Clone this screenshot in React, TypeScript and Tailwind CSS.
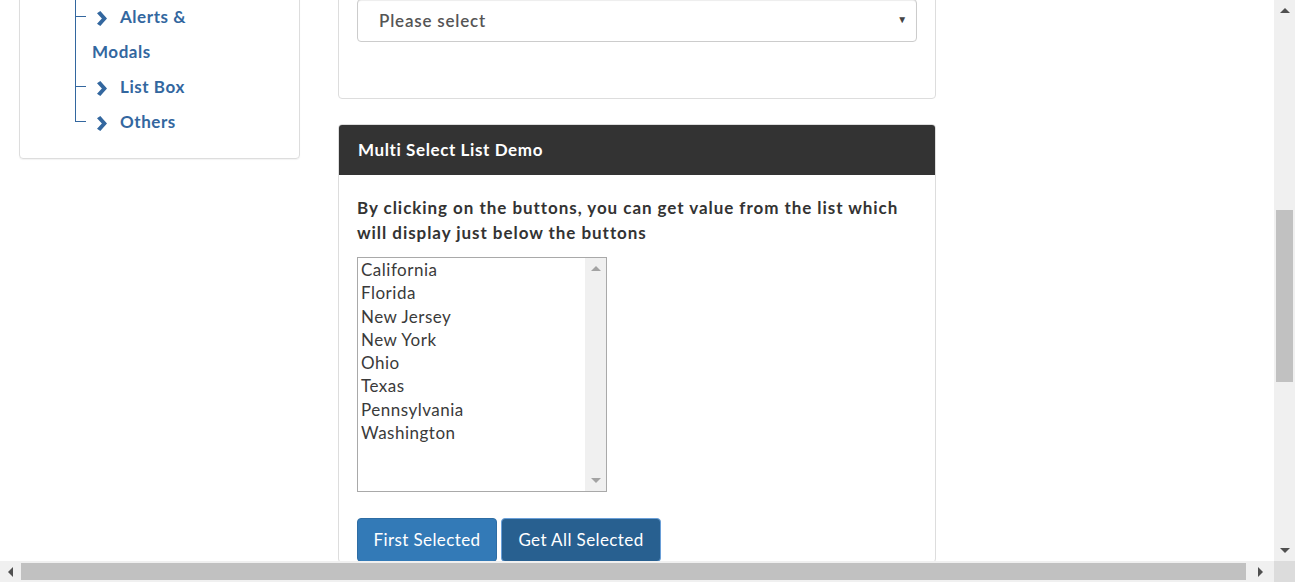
import React from "react";

const font = { fontFamily: "Lato, 'Noto Sans', sans-serif" };

function Chevron() {
  return (
    <svg width="12" height="15" viewBox="0 0 12 15" className="inline-block">
      <path d="M1 2.2 L4.3 0 L11 7.5 L4.3 15 L1 12.8 L5.9 7.5 Z" fill="#33679f" />
    </svg>
  );
}

function TreeItem({ children, tick }: { children: React.ReactNode; tick?: boolean }) {
  return (
    <div className="relative pl-[17px] leading-[35px]">
      {tick && <div className="absolute left-0 top-[17px] w-[11px] h-[1px] bg-[#33679f]" />}
      <span className="inline-block w-[28px] pl-[4px]"><Chevron /></span>
      {children}
    </div>
  );
}

function ScrollArrow({ dir }: { dir: "up" | "down" | "left" | "right" }) {
  const pts = {
    up: "0,6 5,1 10,6",
    down: "0,1 5,6 10,1",
    left: "6,0 1,5 6,10",
    right: "1,0 6,5 1,10",
  }[dir];
  const w = dir === "up" || dir === "down" ? 10 : 7;
  const h = dir === "up" || dir === "down" ? 7 : 10;
  return (
    <svg width={w} height={h} viewBox={`0 0 ${w} ${h}`}>
      <polygon points={pts} fill="#505050" />
    </svg>
  );
}

export default function App() {
  const states = ["California", "Florida", "New Jersey", "New York", "Ohio", "Texas", "Pennsylvania", "Washington"];
  return (
    <div className="relative w-[1295px] h-[582px] overflow-hidden bg-white" style={font}>
      <div className="flex w-[1274px] h-[561px] overflow-hidden">
        {/* Sidebar */}
        <div className="w-[338px] shrink-0 pl-[19px] pr-[38px]">
          <div className="-mt-[12px] h-[171px] border border-[#dddddd] rounded-[4px] shadow-[0_1px_1px_rgba(0,0,0,0.05)] pt-[10px]">
            <div className="ml-[55px] w-[160px] text-[17px] font-bold tracking-[0.55px] text-[#33679f]">
              <div className="relative">
                <div className="absolute left-0 top-[-10px] h-[133px] w-[1px] bg-[#33679f]" />
                <TreeItem tick>
                  Alerts &amp;
                  <br />
                  Modals
                </TreeItem>
                <TreeItem tick>List Box</TreeItem>
                <TreeItem tick>Others</TreeItem>
              </div>
            </div>
          </div>
        </div>

        {/* Main */}
        <div className="w-[598px] shrink-0">
          <div className="-mt-[10px] h-[109px] border border-[#dddddd] rounded-[4px] px-[18px] pt-[8px]">
            <div className="relative h-[43px] w-[560px] border border-[#cccccc] rounded-[4px] flex items-center pl-[21px] text-[17px] font-semibold tracking-[0.8px] text-[#555555] shadow-[inset_0_1px_1px_rgba(0,0,0,0.075)]">
              Please select
              <span className="absolute right-[8px] top-[12px] text-[10px] text-[#444]">▼</span>
            </div>
          </div>

          <div className="mt-[25px] border border-[#dddddd] rounded-[4px]">
            <div className="h-[50px] bg-[#333333] rounded-t-[3px] flex items-center px-[19px] text-[17px] font-bold tracking-[0.6px] text-white">
              Multi Select List Demo
            </div>
            <div className="px-[18px] pt-[20px]">
              <p className="text-[17px] leading-[25px] font-bold tracking-[0.95px] text-[#333333]">
                By clicking on the buttons, you can get value from the list which will display just below the buttons
              </p>
              <div className="mt-[12px] flex w-[250px] h-[235px] border border-[#a9a9a9]">
                <div className="flex-1 pl-[3px] text-[17px] leading-[23.3px] tracking-[0.5px] text-[#3a3a3a]">
                  {states.map((s) => (
                    <div key={s}>{s}</div>
                  ))}
                </div>
                <div className="w-[21px] bg-[#f0f0f0] flex flex-col items-center justify-between py-[7px]">
                  <svg width="10" height="6" viewBox="0 0 10 6"><polygon points="0,6 5,1 10,6" fill="#a3a3a3" /></svg>
                  <svg width="10" height="6" viewBox="0 0 10 6"><polygon points="0,0 5,5 10,0" fill="#a3a3a3" /></svg>
                </div>
              </div>
              <div className="mt-[26px] flex gap-[4px]">
                <button className="w-[140px] h-[44px] rounded-[4px] bg-[#337ab7] border border-[#2e6da4] text-white text-[17px] tracking-[0.4px]">
                  First Selected
                </button>
                <button className="w-[160px] h-[44px] rounded-[4px] bg-[#286090] border border-[#6a9fd8] text-white text-[17px] tracking-[0.4px]">
                  Get All Selected
                </button>
              </div>
            </div>
          </div>
        </div>
        <div className="flex-1" />
      </div>

      {/* Vertical scrollbar */}
      <div className="absolute right-0 top-0 w-[21px] h-[561px] bg-[#f0f0f0] flex flex-col items-center">
        <div className="h-[21px] flex items-center justify-center"><ScrollArrow dir="up" /></div>
        <div className="absolute left-[2px] top-[210px] w-[17px] h-[172px] bg-[#c1c1c1]" />
        <div className="absolute bottom-0 h-[21px] w-full flex items-center justify-center"><ScrollArrow dir="down" /></div>
      </div>
      {/* Horizontal scrollbar */}
      <div className="absolute left-0 bottom-0 w-[1274px] h-[21px] bg-[#f0f0f0] flex items-center">
        <div className="w-[21px] flex justify-center"><ScrollArrow dir="left" /></div>
        <div className="w-[1225px] h-[17px] bg-[#c1c1c1]" />
        <div className="flex-1 flex justify-center"><ScrollArrow dir="right" /></div>
      </div>
      <div className="absolute right-0 bottom-0 w-[21px] h-[21px] bg-[#dcdcdc]" />
    </div>
  );
}
